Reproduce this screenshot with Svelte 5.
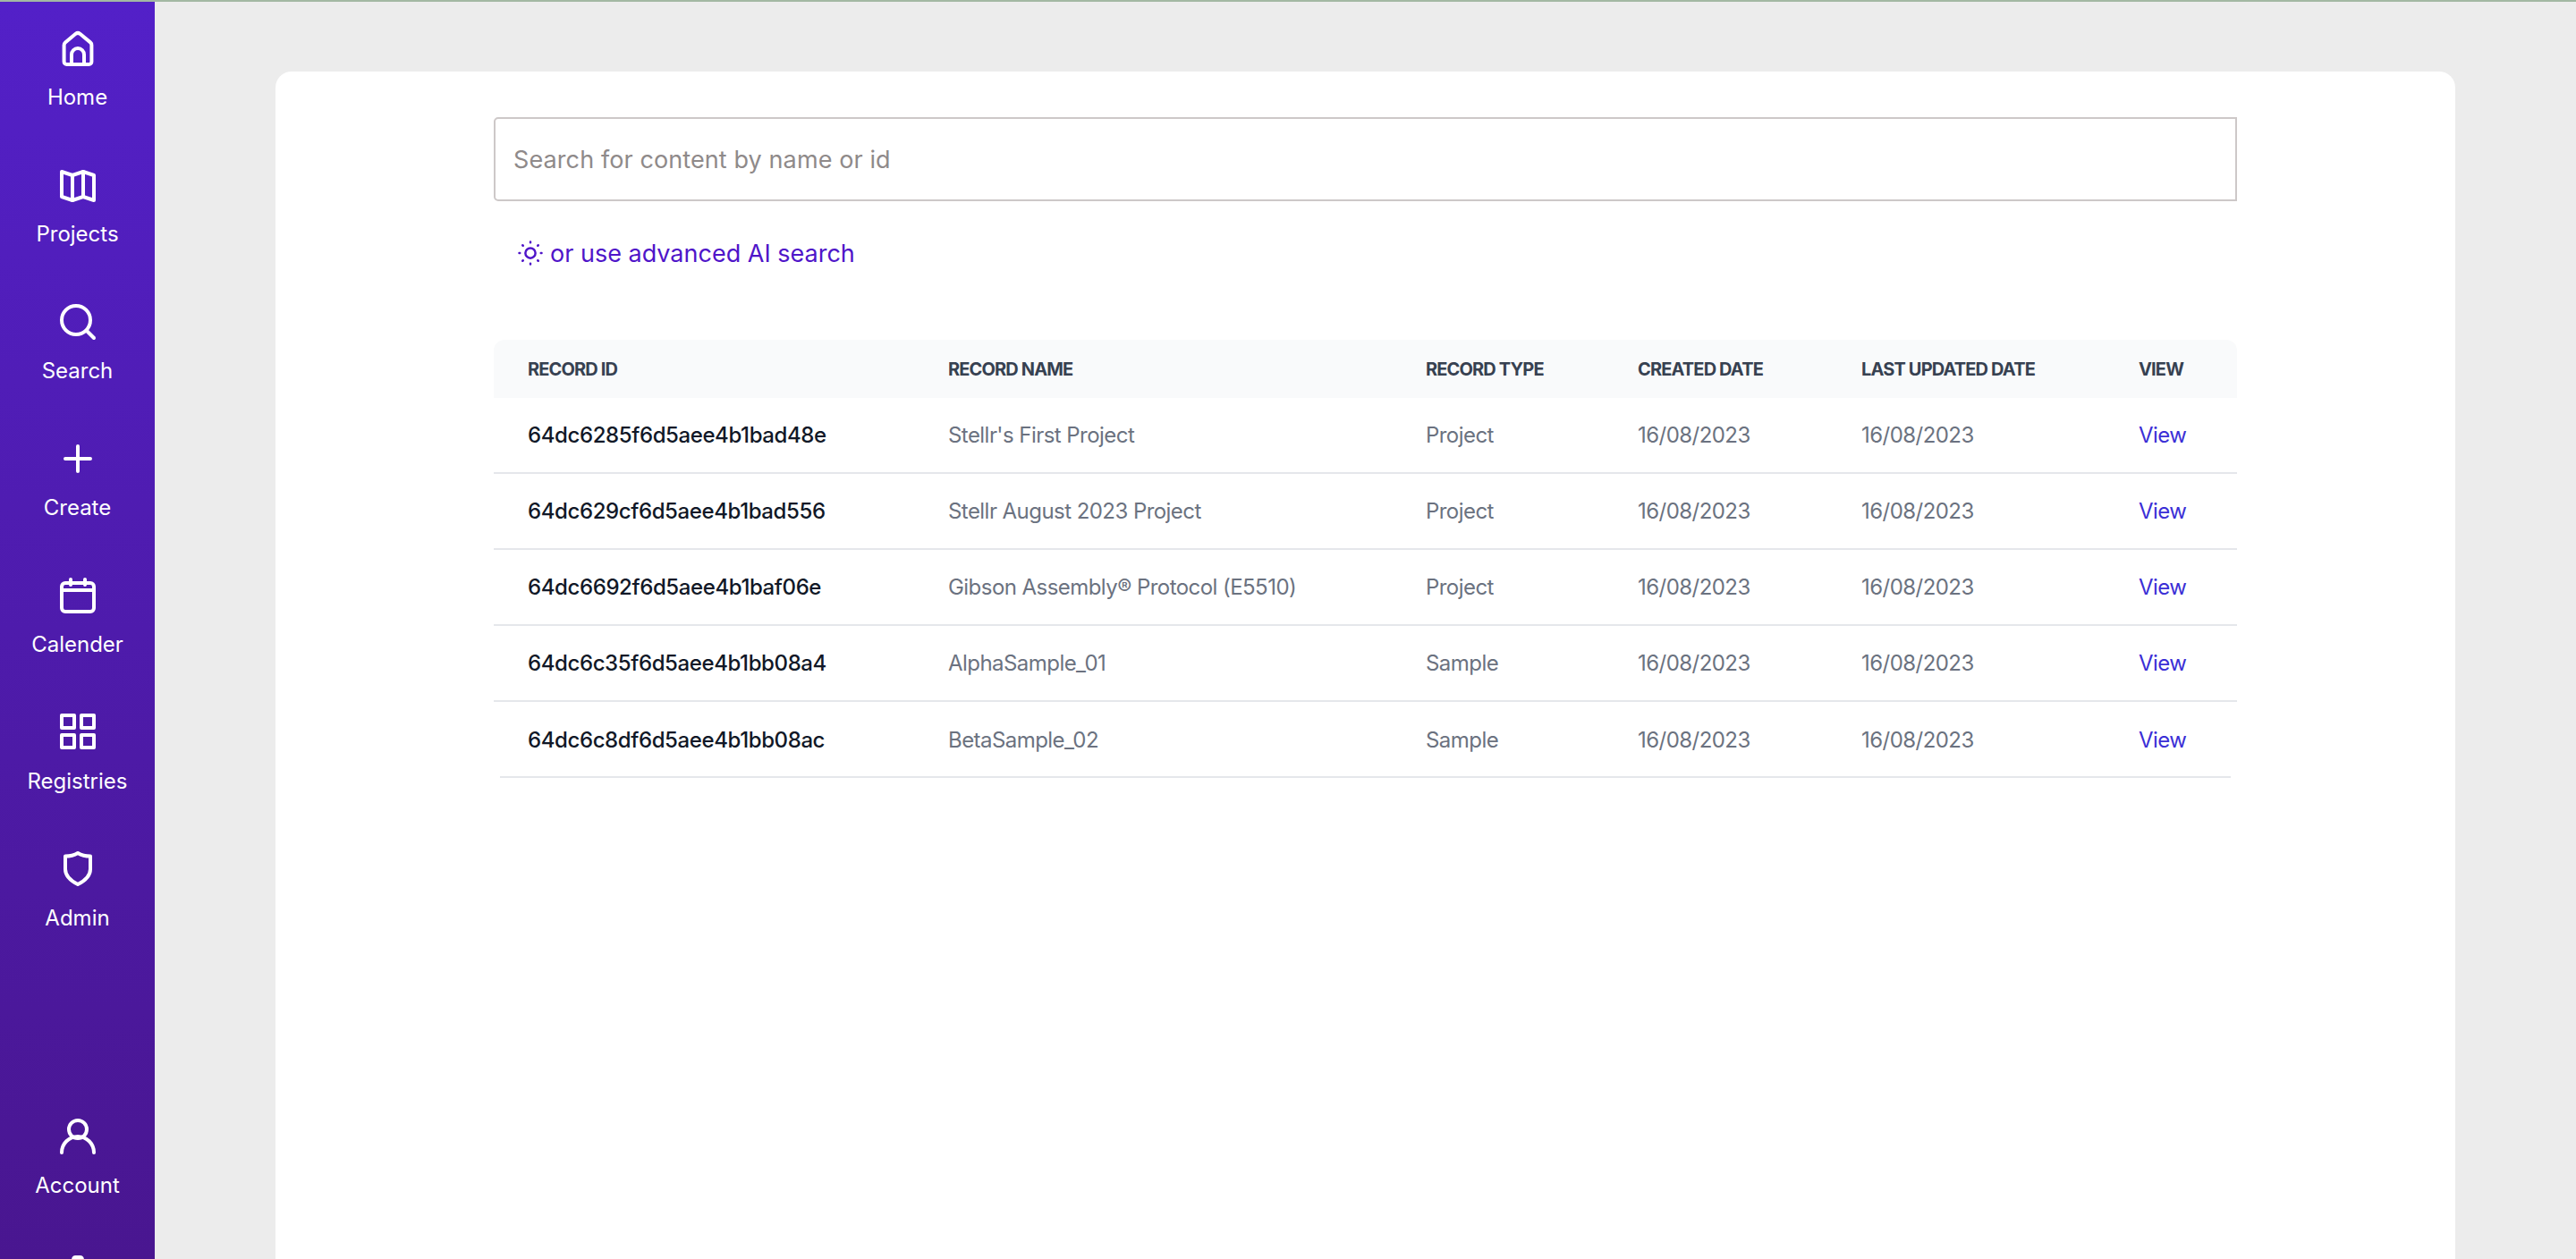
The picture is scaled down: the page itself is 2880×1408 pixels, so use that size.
<script>
  const navTop = [
    { label: 'Home', icon: 'home' },
    { label: 'Projects', icon: 'map' },
    { label: 'Search', icon: 'search' },
    { label: 'Create', icon: 'plus' },
    { label: 'Calender', icon: 'calendar' },
    { label: 'Registries', icon: 'grid' },
    { label: 'Admin', icon: 'shield' }
  ];
  const navBottom = [
    { label: 'Account', icon: 'user' },
    { label: '', icon: 'gear' }
  ];
  const records = [
    ['64dc6285f6d5aee4b1bad48e', "Stellr's First Project", 'Project'],
    ['64dc629cf6d5aee4b1bad556', 'Stellr August 2023 Project', 'Project'],
    ['64dc6692f6d5aee4b1baf06e', 'Gibson Assembly® Protocol (E5510)', 'Project'],
    ['64dc6c35f6d5aee4b1bb08a4', 'AlphaSample_01', 'Sample'],
    ['64dc6c8df6d5aee4b1bb08ac', 'BetaSample_02', 'Sample']
  ];
</script>

{#snippet icon(name)}
  <svg viewBox="0 0 24 24" width="48" height="48" fill="none" stroke="currentColor" stroke-width="2" stroke-linecap="round" stroke-linejoin="round" aria-hidden="true">
    {#if name === 'home'}
      <path d="M10.800 3.900a2 2 0 0 1 2.400 0l5.800 4.800a2 2 0 0 1 .7 1.500V19.500a1.500 1.500 0 0 1-1.500 1.500H5.800a1.500 1.500 0 0 1-1.500-1.500V10.200a2 2 0 0 1 .7-1.500Z" />
      <path d="M8.500 21v-5.500a3.500 3.500 0 0 1 7 0V21" />
    {:else if name === 'map'}
      <path d="M3 4.500 9 6.500l6-2 6 2v14l-6-2-6 2-6-2Z" />
      <path d="M9 6.500v14M15 4.500v14" />
    {:else if name === 'search'}
      <circle cx="11" cy="11" r="8" />
      <path d="m17 17 4 4" />
    {:else if name === 'plus'}
      <path d="M12 5v14M5 12h14" />
    {:else if name === 'calendar'}
      <rect x="3" y="5" width="18" height="16" rx="2" />
      <path d="M3 9h18M8 3v3M16 3v3" />
    {:else if name === 'grid'}
      <rect x="3" y="2.500" width="7" height="7" />
      <rect x="14" y="2.500" width="7" height="7" />
      <rect x="3" y="13.500" width="7" height="7" />
      <rect x="14" y="13.500" width="7" height="7" />
    {:else if name === 'shield'}
      <path d="M12 3c2 1.200 4.600 1.800 7 1.800V12c0 4-3 6.500-7 8.500C8 18.500 5 16 5 12V4.800c2.400 0 5-.6 7-1.800Z" />
    {:else if name === 'user'}
      <circle cx="12" cy="8" r="5" />
      <path d="M3 21a9 9 0 0 1 18 0" />
    {:else if name === 'gear'}
      <path d="M9.594 3.940c.09-.542.56-.94 1.110-.94h2.593c.55 0 1.020.398 1.110.94l.213 1.281c.063.374.313.686.645.87.074.04.147.083.22.127.325.196.72.257 1.075.124l1.217-.456a1.125 1.125 0 0 1 1.370.49l1.296 2.247a1.125 1.125 0 0 1-.26 1.431l-1.003.827c-.293.241-.438.613-.43.992a7.723 7.723 0 0 1 0 .255c-.008.378.137.75.43.991l1.004.827c.424.35.534.955.26 1.430l-1.298 2.247a1.125 1.125 0 0 1-1.369.491l-1.217-.456c-.355-.133-.75-.072-1.076.124a6.470 6.470 0 0 1-.22.128c-.331.183-.581.495-.644.869l-.213 1.281c-.09.543-.56.94-1.110.94h-2.594c-.55 0-1.019-.398-1.110-.94l-.213-1.281c-.062-.374-.312-.686-.644-.87a6.520 6.520 0 0 1-.22-.127c-.325-.196-.72-.257-1.076-.124l-1.217.456a1.125 1.125 0 0 1-1.369-.49l-1.297-2.247a1.125 1.125 0 0 1 .26-1.431l1.004-.827c.292-.24.437-.613.43-.991a6.932 6.932 0 0 1 0-.255c.007-.38-.138-.751-.43-.992l-1.004-.827a1.125 1.125 0 0 1-.26-1.430l1.297-2.247a1.125 1.125 0 0 1 1.370-.491l1.216.456c.356.133.751.072 1.076-.124.072-.044.146-.086.22-.128.332-.183.582-.495.644-.869l.214-1.280Z" />
    {/if}
  </svg>
{/snippet}

<div class="shell">
  <nav class="sidebar">
    <div class="nav-group">
      {#each navTop as item}
        <a class="nav-item" href="#top">
          {@render icon(item.icon)}
          <span>{item.label}</span>
        </a>
      {/each}
    </div>
    <div class="nav-group">
      {#each navBottom as item}
        <a class="nav-item" href="#top">
          {@render icon(item.icon)}
          {#if item.label}<span>{item.label}</span>{/if}
        </a>
      {/each}
    </div>
  </nav>

  <main class="content">
    <section class="card">
      <input class="search" type="text" placeholder="Search for content by name or id" />

      <a class="ai-link" href="#top">
        <svg viewBox="0 0 24 24" width="30" height="30" fill="none" stroke="currentColor" stroke-width="2" stroke-linecap="round" aria-hidden="true">
          <circle cx="12" cy="12" r="4.500" />
          <path d="M12 2v.6M12 21.400v.6M2 12h.6M21.400 12h.6M5 5l.4.4M18.600 18.600l.4.4M5 19l.4-.4M18.600 5.400l.4-.4" />
        </svg>
        or use advanced AI search
      </a>

      <table class="records">
        <thead>
          <tr>
            <th class="col-id">Record ID</th>
            <th class="col-name">Record Name</th>
            <th class="col-type">Record Type</th>
            <th class="col-created">Created Date</th>
            <th class="col-updated">Last Updated Date</th>
            <th>View</th>
          </tr>
        </thead>
        <tbody>
          {#each records as [id, name, type]}
            <tr>
              <td class="id">{id}</td>
              <td>{name}</td>
              <td>{type}</td>
              <td>16/08/2023</td>
              <td>16/08/2023</td>
              <td><a class="view" href="#top">View</a></td>
            </tr>
          {/each}
        </tbody>
      </table>
      <div class="table-end"></div>
    </section>
  </main>
</div>

<style>
  :global(body) {
    margin: 0;
    background: #ececec;
    font-family: "Inter", "Open Sans", sans-serif;
  }

  .shell {
    display: flex;
    height: 1408px;
    overflow: hidden;
    border-top: 2px solid #a3b8a3;
    box-sizing: border-box;
  }

  .sidebar {
    flex: 0 0 173px;
    height: 1551px;
    display: flex;
    flex-direction: column;
    justify-content: space-between;
    background: linear-gradient(180deg, #5320c8, #48158a);
    color: #fff;
  }

  .nav-group {
    display: flex;
    flex-direction: column;
    padding-top: 28px;
  }

  .nav-item {
    height: 153px;
    display: flex;
    flex-direction: column;
    align-items: center;
    color: inherit;
    text-decoration: none;
    font-size: 24px;
    font-weight: 400;
    line-height: 32px;
  }

  .nav-item span {
    margin-top: 15px;
  }

  .content {
    flex: 1;
    min-width: 0;
    padding: 78px 135px 0;
  }

  .card {
    box-sizing: border-box;
    height: 1500px;
    padding: 51px 244px 0;
    background: #fff;
    border-radius: 18px;
  }

  .search {
    display: block;
    box-sizing: border-box;
    width: 100%;
    height: 94px;
    padding: 0 20px;
    border: 2px solid #cdc8c8;
    border-radius: 5px 0 0 5px;
    font: 400 27px "Inter", sans-serif;
    letter-spacing: 0.1px;
    color: #333;
    outline: none;
  }

  .search::placeholder {
    color: #8f8a8a;
  }

  .ai-link {
    display: flex;
    align-items: center;
    gap: 7px;
    margin: 42px 0 81px 26px;
    height: 32px;
    color: #4f15c9;
    font-size: 27px;
    text-decoration: none;
  }

  .records {
    width: 100%;
    table-layout: fixed;
    border-collapse: separate;
    border-spacing: 0;
  }

  th,
  td {
    box-sizing: border-box;
    padding: 0 0 0 38px;
  }

  th {
    height: 65px;
    background: #f9fafb;
    color: #374151;
    font-size: 20px;
    font-weight: 700;
    letter-spacing: -0.85px;
    text-align: left;
    text-transform: uppercase;
  }

  th:first-child {
    border-radius: 12px 0 0 0;
  }

  th:last-child {
    border-radius: 0 12px 0 0;
  }

  .col-id {
    width: 470px;
  }

  .col-name {
    width: 534px;
  }

  .col-type {
    width: 237px;
  }

  .col-created {
    width: 250px;
  }

  .col-updated {
    width: 310px;
  }

  td {
    height: 85px;
    border-bottom: 2px solid #e5e7eb;
    color: #6b7280;
    font-size: 24px;
    letter-spacing: -0.55px;
    white-space: nowrap;
  }

  tbody tr:last-child td {
    border-bottom: 0;
  }

  .id {
    color: #111827;
    font-weight: 500;
    letter-spacing: -0.4px;
  }

  .view {
    color: #3b2fd6;
    text-decoration: none;
  }

  .table-end {
    height: 2px;
    margin: -2px 7px 0;
    background: #e5e7eb;
  }
</style>
